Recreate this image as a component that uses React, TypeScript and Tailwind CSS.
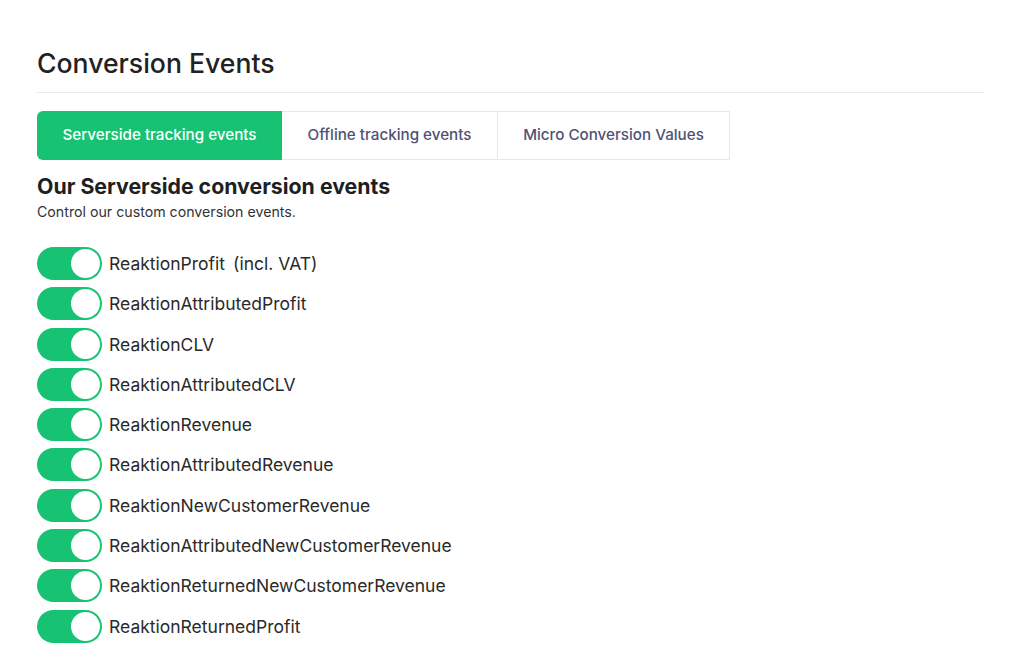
import { useState } from "react";

const EVENTS = [
  "ReaktionProfit\u2009 (incl. VAT)",
  "ReaktionAttributedProfit",
  "ReaktionCLV",
  "ReaktionAttributedCLV",
  "ReaktionRevenue",
  "ReaktionAttributedRevenue",
  "ReaktionNewCustomerRevenue",
  "ReaktionAttributedNewCustomerRevenue",
  "ReaktionReturnedNewCustomerRevenue",
  "ReaktionReturnedProfit",
];

const TABS = ["Serverside tracking events", "Offline tracking events", "Micro Conversion Values"];

function Toggle({ on, onClick }: { on: boolean; onClick: () => void }) {
  return (
    <button
      onClick={onClick}
      className={`flex h-[33px] w-[65px] shrink-0 items-center rounded-full px-[2px] ${
        on ? "justify-end bg-[#17c372]" : "justify-start bg-[#d5dbe3]"
      }`}
    >
      <span className="block h-[29px] w-[29px] rounded-full bg-white" />
    </button>
  );
}

export default function App() {
  const [tab, setTab] = useState(0);
  const [enabled, setEnabled] = useState(EVENTS.map(() => true));

  return (
    <div
      className="min-h-[649px] w-[1024px] bg-white px-[37px] pt-[46px] text-[#222]"
      style={{ fontFamily: "Inter, 'Noto Sans', sans-serif" }}
    >
      <h1 className="text-[26.6px] font-medium leading-[34px] text-[#222]">Conversion Events</h1>
      <div className="mt-[12px] mr-[3px] h-px bg-[#ebebeb]" />

      <div className="mt-[18px] flex">
        {TABS.map((t, i) => (
          <button
            key={t}
            onClick={() => setTab(i)}
            className={`flex h-[49px] items-center justify-center text-[15.2px] font-medium ${
              i === 0 ? "w-[245px] rounded-l-[6px]" : i === 1 ? "w-[216px] border-y border-r" : "w-[232px] border-y border-r"
            } ${
              tab === i
                ? "bg-[#17c372] text-white"
                : "border-[#e3e8ef] bg-white text-[#4f5273]"
            }`}
          >
            {t}
          </button>
        ))}
      </div>

      <h2 className="mt-[13px] text-[21.3px] font-bold leading-[26px] text-[#1f1f1f]">Our Serverside conversion events</h2>
      <p className="mt-[4px] text-[14.2px] leading-[18px] text-[#333]">Control our custom conversion events.</p>

      <div className="mt-[26px] flex flex-col gap-[7.3px]">
        {EVENTS.map((e, i) => (
          <div key={e} className="flex items-center gap-[7px]">
            <Toggle
              on={enabled[i]}
              onClick={() => setEnabled((s) => s.map((v, j) => (j === i ? !v : v)))}
            />
            <span className="text-[17.5px] leading-[33px] text-[#2a2a2a]">{e}</span>
          </div>
        ))}
      </div>
    </div>
  );
}
